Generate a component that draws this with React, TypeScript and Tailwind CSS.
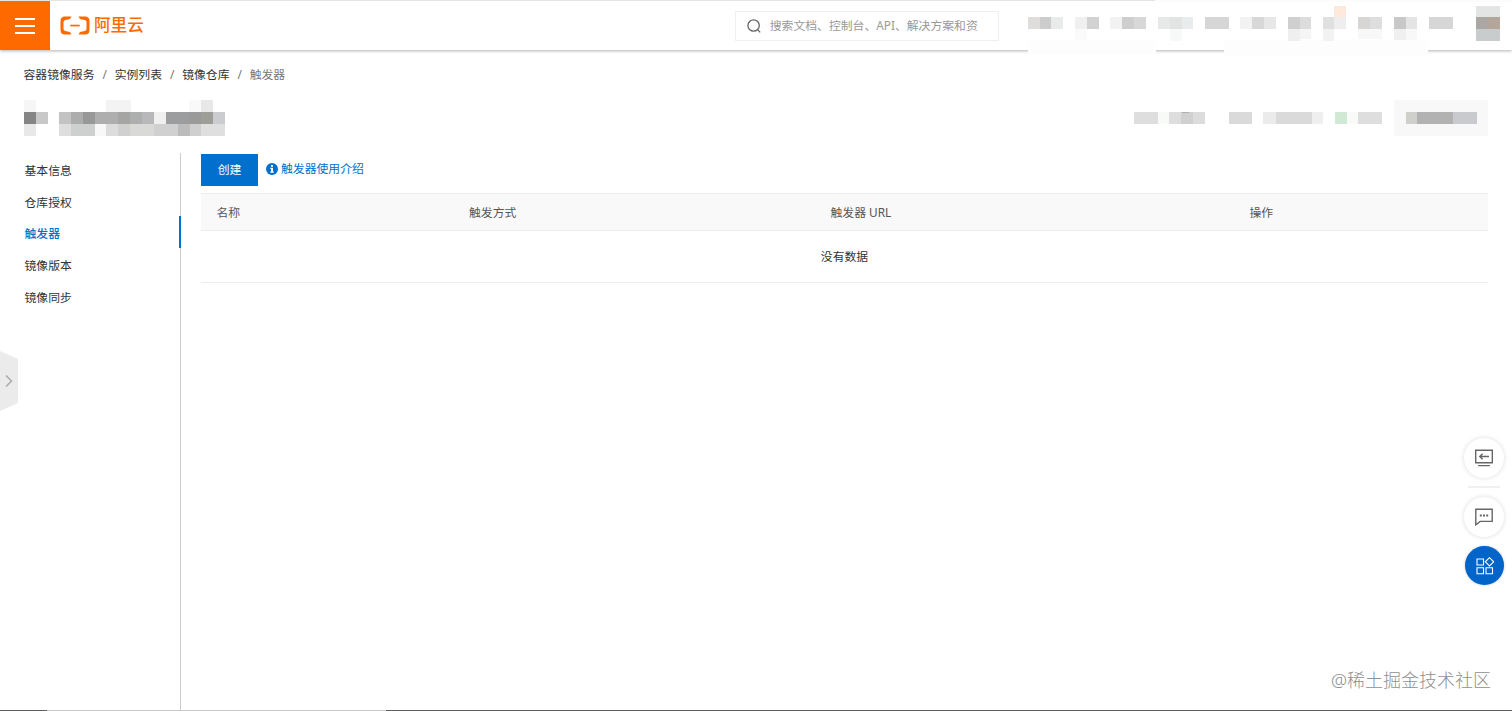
type Block = [x: number, y: number, w: number, h: number, color: string];

const breadcrumbs = ["容器镜像服务", "实例列表", "镜像仓库", "触发器"];
const menuItems = ["基本信息", "仓库授权", "触发器", "镜像版本", "镜像同步"];
const activeItem = "触发器";

// Pixelated account menu in the top bar
const navBlocks: Block[] = [
  [145, 0, 357, 2, "#fcfcfc"],
  [18, 40, 128, 14, "#fdfdfd"],
  [214, 40, 204, 16, "#fdfdfd"],
  [18, 17, 12, 12, "#dedddb"],
  [30, 17, 11, 12, "#cccccc"],
  [41, 17, 12, 12, "#e9eaea"],
  [65, 17, 12, 12, "#f0f0f0"],
  [77, 17, 12, 12, "#d2d2d2"],
  [65, 29, 12, 11, "#fafafa"],
  [100, 17, 12, 12, "#f2f2f2"],
  [112, 17, 12, 12, "#cecece"],
  [124, 17, 12, 12, "#d8d8d8"],
  [148, 17, 12, 12, "#e7e8e8"],
  [160, 17, 12, 12, "#e2e4e4"],
  [172, 17, 11, 12, "#e9ecec"],
  [160, 29, 12, 12, "#f7f8f8"],
  [195, 17, 24, 12, "#d6d6d6"],
  [230, 17, 12, 12, "#f2f2f2"],
  [242, 17, 12, 12, "#d8d8d8"],
  [254, 17, 12, 12, "#e7e7e7"],
  [278, 17, 12, 12, "#cfcfcf"],
  [290, 17, 11, 12, "#dcdcdc"],
  [278, 29, 12, 12, "#efefef"],
  [290, 29, 11, 10, "#f5f5f5"],
  [313, 17, 11, 12, "#e0e0e0"],
  [324, 17, 12, 12, "#eeeeee"],
  [313, 29, 11, 12, "#f2f2f2"],
  [324, 6, 12, 11, "#ffe9dc"],
  [348, 17, 12, 12, "#d8d6d4"],
  [360, 17, 12, 12, "#dedede"],
  [348, 29, 24, 10, "#f8f8f8"],
  [384, 17, 12, 12, "#c8c8c8"],
  [396, 17, 11, 12, "#e4e4e4"],
  [384, 29, 12, 11, "#f0f0f0"],
  [396, 29, 11, 11, "#f8f8f8"],
  [419, 17, 24, 12, "#d6d6d6"],
  [466, 6, 24, 11, "#e3e4e4"],
  [466, 17, 12, 12, "#aaa7a5"],
  [478, 17, 12, 12, "#b5a69c"],
  [466, 29, 24, 12, "#c9cccd"],
];

const titleBlocks: Block[] = [
  [0, 3, 12, 12, "#f6f6f6"],
  [0, 15, 12, 12, "#858585"],
  [12, 15, 12, 12, "#c8c8c8"],
  [0, 27, 12, 12, "#e8e8e8"],
  [82, 3, 25, 12, "#f3f3f3"],
  [165, 3, 12, 12, "#f9f9f9"],
  [177, 3, 12, 12, "#e8e8e8"],
  [35, 15, 12, 12, "#c3c3c3"],
  [47, 15, 12, 12, "#adadae"],
  [59, 15, 12, 12, "#989898"],
  [71, 15, 23, 12, "#aeaeae"],
  [94, 15, 12, 12, "#a5a6a3"],
  [106, 15, 12, 12, "#adaeae"],
  [118, 15, 12, 12, "#b8b8ba"],
  [130, 15, 12, 12, "#f0f0f0"],
  [142, 15, 23, 12, "#9c9d9e"],
  [165, 15, 12, 12, "#9a9a9b"],
  [177, 15, 12, 12, "#9e9e99"],
  [189, 15, 12, 12, "#cbccd0"],
  [35, 27, 12, 12, "#dedede"],
  [47, 27, 24, 12, "#cecfcf"],
  [71, 27, 11, 12, "#f8f8f8"],
  [82, 27, 12, 12, "#dcdcdc"],
  [94, 27, 12, 12, "#d0d0d0"],
  [106, 27, 24, 12, "#d9d9d8"],
  [130, 27, 24, 12, "#d0d0d0"],
  [154, 27, 12, 12, "#bcbcbd"],
  [166, 27, 11, 12, "#cfcfcf"],
  [177, 27, 24, 12, "#dfdfe0"],
];

const actionBlocks: Block[] = [
  [0, 12, 24, 12, "#dedede"],
  [24, 12, 11, 12, "#f8faf8"],
  [35, 12, 12, 12, "#dedede"],
  [47, 12, 12, 12, "#d0d0d0"],
  [59, 12, 12, 12, "#dcdcdc"],
  [48, 12, 7, 1, "#b0b0b0"],
  [95, 12, 23, 12, "#dadada"],
  [129, 12, 13, 12, "#ebebeb"],
  [142, 12, 36, 12, "#dadada"],
  [178, 12, 11, 12, "#efefef"],
  [201, 12, 12, 12, "#d0e9d4"],
  [213, 12, 11, 12, "#f9fbf9"],
  [224, 12, 24, 12, "#dedede"],
  [260, 0, 94, 36, "#f8f8f8"],
  [272, 12, 11, 12, "#cfcfcc"],
  [283, 12, 36, 12, "#b2b2b2"],
  [319, 12, 24, 12, "#c9cacd"],
];

function Mosaic({ blocks, className }: { blocks: Block[]; className: string }) {
  return (
    <svg className={className} shapeRendering="crispEdges" aria-hidden="true">
      {blocks.map(([x, y, w, h, color], i) => (
        <rect key={i} x={x} y={y} width={w} height={h} fill={color} />
      ))}
    </svg>
  );
}

function Header() {
  return (
    <header className="relative z-10 flex h-[50px] shrink-0 items-start border-t border-[#e4e4e4] bg-white shadow-[0_1px_3px_rgba(0,0,0,0.3)]">
      <button className="flex h-[49px] w-[49.5px] shrink-0 items-center justify-center bg-[#ff6a00]">
        <svg className="h-[18px] w-5" viewBox="0 0 20 18" stroke="#fff" strokeWidth="1.8">
          <path d="M0 2h20M0 9h20M0 16h20" />
        </svg>
      </button>
      <div className="ml-[10.5px] flex h-[48px] items-center text-[#ff6a00]">
        <svg className="h-[19px] w-[30px]" viewBox="0 0 30 19" fill="currentColor">
          <path d="M11.5.5H5Q.5.5.5 5v9Q.5 18.5 5 18.5h6.5l-1.5-2.4-4.6-1.1Q3.500 14.6 3.500 13V6q0-1.600 1.900-2L10 2.900z" />
          <path d="M18.5.5H25Q29.500.5 29.500 5v9q0 4.500-4.500 4.500h-6.500l1.500-2.400 4.600-1.100q1.900-.4 1.900-2V6q0-1.600-1.900-2L20 2.900z" />
          <path d="M10.300 8.700h9.400v1.700h-9.400z" />
        </svg>
        <span className="ml-[4px] text-[16.6px] leading-none font-medium">阿里云</span>
      </div>
      <div className="mt-[10px] ml-[591px] flex h-[30px] w-[264px] shrink-0 items-center border border-[#f0f0f0] pl-[11px]">
        <svg className="h-[14px] w-[14px]" viewBox="0 0 14 14" fill="none" stroke="#666" strokeWidth="1.3">
          <circle cx="6.6" cy="6.5" r="5.7" />
          <path d="m10.600 10.600 2.600 2.800" />
        </svg>
        <span className="-mt-[2px] ml-[9px] whitespace-nowrap text-[#999]">
          搜索文档、控制台、API、解决方案和资
        </span>
      </div>
      <Mosaic blocks={navBlocks} className="-mt-px ml-[11px] h-[56px] w-[502px] shrink-0" />
    </header>
  );
}

function Sidebar() {
  return (
    <nav className="flex w-[181px] shrink-0 flex-col border-r border-[#ccc]">
      {menuItems.map((item) => (
        <div
          key={item}
          className={`-mr-px flex h-[31.6px] items-center pt-[3px] pl-[24.5px] ${
            item === activeItem
              ? "border-r-2 border-[#0070cc] font-medium text-[#0070cc]"
              : "text-[#333]"
          }`}
        >
          {item}
        </div>
      ))}
    </nav>
  );
}

function TriggerTable() {
  return (
    <div className="mt-[7px]">
      <div className="grid h-[38px] grid-cols-[252px_361px_419px_1fr] items-center border-y border-[#ededed] bg-[#f9f9f9] text-[#555]">
        <span className="pl-[15.5px]">名称</span>
        <span className="pl-4">触发方式</span>
        <span className="pl-[16.5px]">触发器 URL</span>
        <span className="pl-[16.5px]">操作</span>
      </div>
      <div className="flex h-[52px] items-center justify-center border-b border-[#ededed] pb-[2px] text-[#333]">
        没有数据
      </div>
    </div>
  );
}

function FloatingTools() {
  return (
    <div className="absolute top-[438px] right-[8px] z-20 flex w-[40px] flex-col items-center">
      <button className="flex h-10 w-10 items-center justify-center rounded-full bg-white shadow-[0_0_5px_rgba(0,0,0,0.14)]">
        <svg className="h-[18px] w-[18px]" viewBox="0 0 18 18" fill="none" stroke="#666" strokeWidth="1.4">
          <path d="M.7 1.200h16.600v12.600H.7zM3.200 16.600h11.600M14 7.500H5M7.600 4.800 4.800 7.500l2.800 2.700" />
        </svg>
      </button>
      <div className="mt-[8px] h-[2px] w-8 bg-[#f0f0f0]" />
      <button className="mt-[9px] flex h-10 w-10 items-center justify-center rounded-full bg-white shadow-[0_0_5px_rgba(0,0,0,0.14)]">
        <svg className="h-[18px] w-[18px]" viewBox="0 0 18 18" fill="none" stroke="#666" strokeWidth="1.4">
          <path d="M.8 1.200h16.400v12.200H5.200L.8 16.800z" />
          <path d="M4.800 7.500h2M8 7.500h2M11.200 7.500h2" strokeWidth="2" />
        </svg>
      </button>
      <button className="mt-[9px] ml-px flex h-[39px] w-[39px] items-center justify-center rounded-full bg-[#0064c8] shadow-[0_0_3px_rgba(0,0,0,0.2)]">
        <svg className="h-[18px] w-[18px]" viewBox="0 0 18 18" fill="none" stroke="#fff" strokeWidth="1.1">
          <path d="M1 2h6.500v6H1zM1 10.800h6.500v6H1zM10 10.800h6.500v6H10zM13.500.6l4.200 4.200L13.500 9 9.300 4.800z" />
        </svg>
      </button>
    </div>
  );
}

export default function App() {
  return (
    <div className="relative flex h-[711px] w-[1512px] flex-col overflow-hidden bg-white font-['Noto_Sans','Noto_Sans_CJK_SC',sans-serif] text-[11.83px] leading-[18px] text-[#333]">
      <Header />

      <div className="mt-[15px] flex h-[18px] items-center pl-[23.5px]">
        {breadcrumbs.map((crumb, i) => (
          <span key={crumb} className="flex">
            {i > 0 && <span className="w-[20.200px] text-center text-[#777]">/</span>}
            <span className={i === breadcrumbs.length - 1 ? "text-[#777]" : ""}>{crumb}</span>
          </span>
        ))}
      </div>

      <div className="mt-[14px] flex h-[56px] items-start justify-between pr-[24px] pl-[23.5px]">
        <Mosaic blocks={titleBlocks} className="h-[39px] w-[201px]" />
        <Mosaic blocks={actionBlocks} className="mt-[3px] h-[36px] w-[354px]" />
      </div>

      <div className="flex flex-1">
        <Sidebar />
        <main className="mr-6 ml-5 flex-1 pt-px">
          <div className="flex h-8 items-center">
            <button className="h-8 w-[57px] bg-[#0070cc] pb-[2px] text-white">创建</button>
            <a className="-mt-[4px] ml-2 flex items-center text-[#0070cc]">
              <svg className="mt-px mr-[3px] h-3 w-3" viewBox="0 0 12 12">
                <circle cx="6" cy="6" r="6" fill="currentColor" />
                <path d="M5 2h2v1.700H5zM4.300 4.800H7v3.700h.8v1.200H4.300V8.500H5V6h-.7z" fill="#fff" />
              </svg>
              触发器使用介绍
            </a>
          </div>
          <TriggerTable />
        </main>
      </div>

      {/* Window edge along the bottom */}
      <div className="flex h-px shrink-0 bg-[#5e5e5e]">
        <div className="ml-[47px] w-[339px] bg-[#c9c9c9]" />
      </div>

      {/* Drawer handle */}
      <svg className="absolute top-[351px] left-0 h-[60px] w-[18px]" viewBox="0 0 18 60">
        <path d="M0 0 18 8v44L0 60z" fill="#ebebeb" />
        <path d="m6 24.500 5.500 5.500L6 35.500" fill="none" stroke="#aaa" strokeWidth="1.5" />
      </svg>

      <FloatingTools />

      <div className="absolute right-[21px] bottom-[19px] text-[18px] leading-6 font-light whitespace-nowrap text-[#8f8f8f]">
        @稀土掘金技术社区
      </div>
    </div>
  );
}
